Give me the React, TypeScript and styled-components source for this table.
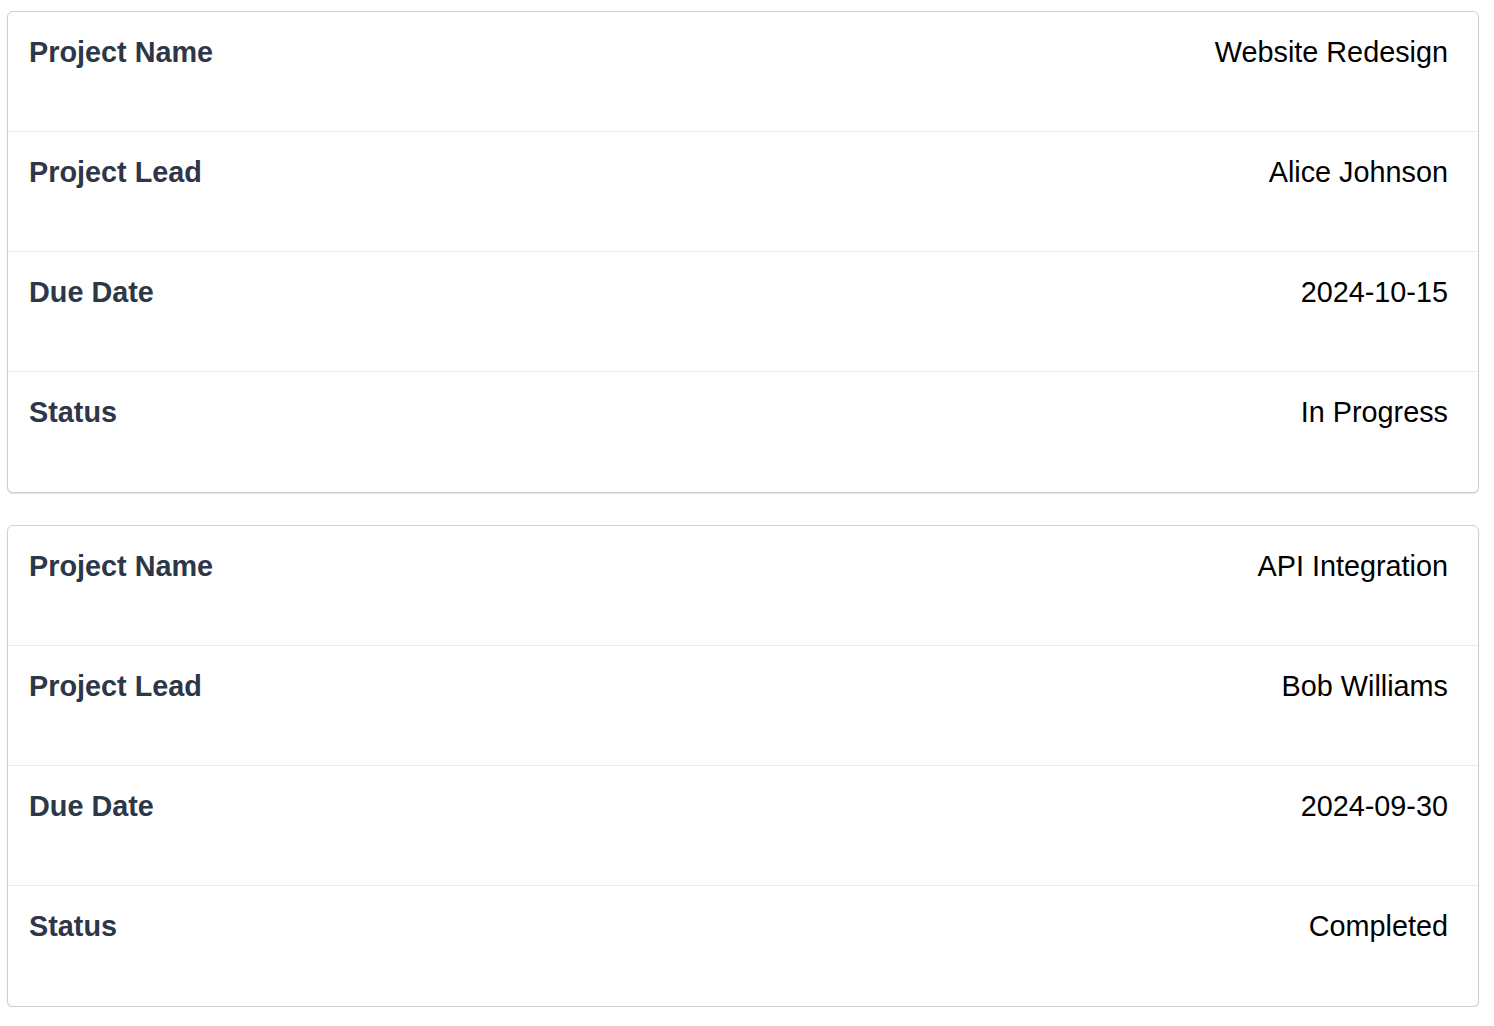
import styled, { createGlobalStyle } from 'styled-components';

interface ProjectField {
  label: string;
  value: string;
}

interface Project {
  id: string;
  fields: ProjectField[];
}

const projects: Project[] = [
  {
    id: 'website',
    fields: [
      { label: 'Project Name', value: 'Website Redesign' },
      { label: 'Project Lead', value: 'Alice Johnson' },
      { label: 'Due Date', value: '2024-10-15' },
      { label: 'Status', value: 'In Progress' },
    ],
  },
  {
    id: 'api',
    fields: [
      { label: 'Project Name', value: 'API Integration' },
      { label: 'Project Lead', value: 'Bob Williams' },
      { label: 'Due Date', value: '2024-09-30' },
      { label: 'Status', value: 'Completed' },
    ],
  },
];

const GlobalStyle = createGlobalStyle`
  html, body {
    margin: 0;
    padding: 0;
    background: #ffffff;
  }
  body {
    font-family: 'Liberation Sans', Arial, Helvetica, sans-serif;
  }
  * {
    box-sizing: border-box;
  }
`;

const Page = styled.main`
  display: flex;
  flex-direction: column;
  gap: 32px;
  padding: 11px 15px 0 7px;
`;

const Card = styled.section`
  display: flex;
  flex-direction: column;
  border: 1px solid #cfcfcf;
  border-radius: 6px;
  background: #ffffff;
  box-shadow: 0 1px 1px rgba(0, 0, 0, 0.12);
`;

const Row = styled.div<{ $last?: boolean }>`
  display: flex;
  justify-content: space-between;
  align-items: flex-start;
  height: 120px;
  padding: 24px 30px 0 21px;
  border-bottom: ${({ $last }) => ($last ? 'none' : '1px solid #ececec')};
`;

const Label = styled.span`
  font-size: 28.8px;
  font-weight: 700;
  color: #2d3748;
`;

const Value = styled.span`
  font-size: 28.8px;
  color: #000000;
  text-align: right;
`;

export default function App() {
  return (
    <>
      <GlobalStyle />
      <Page>
        {projects.map((project) => (
          <Card key={project.id}>
            {project.fields.map((field, i) => (
              <Row key={field.label} $last={i === project.fields.length - 1}>
                <Label>{field.label}</Label>
                <Value>{field.value}</Value>
              </Row>
            ))}
          </Card>
        ))}
      </Page>
    </>
  );
}
